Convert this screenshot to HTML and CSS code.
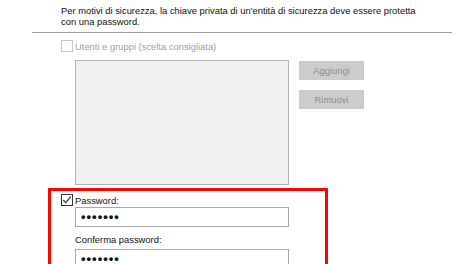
FILE: index.html
```html
<!DOCTYPE html>
<html lang="it">
<head>
<meta charset="UTF-8">
<title>Proteggi chiave privata</title>
<link rel="stylesheet" href="styles.css">
</head>
<body>
<div class="dialog">
<p class="intro">Per motivi di sicurezza, la chiave privata di un'entità di sicurezza deve essere protetta<br>con una password.</p>
<div class="separator"></div>
<div class="users">
<label class="check disabled"><span class="box"></span>Utenti e gruppi (scelta consigliata)</label>
<div class="users-row">
<div class="listbox"></div>
<div class="buttons">
<button disabled>Aggiungi</button>
<button disabled>Rimuovi</button>
</div>
</div>
</div>
<div class="password-box">
<label class="check"><span class="box checked"><svg width="10" height="10" viewBox="0 0 10 10"><path d="M1.2 5 L3.8 7.6 L8.8 1.4" fill="none" stroke="#333" stroke-width="1.1"/></svg></span>Password:</label>
<div class="field">•••••••</div>
<div class="field-label">Conferma password:</div>
<div class="field second">•••••••</div>
</div>
</div>
</body>
</html>
```

FILE: styles.css
```css
* {
    margin: 0;
    padding: 0;
    box-sizing: border-box;
}
body {
    background: white;
    color: #111;
    font-family: 'Liberation Sans', Arial, sans-serif;
    font-size: 9.4px;
}
.dialog {
    width: 470px;
    height: 264px;
    overflow: hidden;
}
.intro {
    padding: 5px 0 0 61px;
    line-height: 11px;
}
.separator {
    margin: 5px 0 0 32px;
    width: 420px;
    height: 1px;
    background: #a0a0a0;
}
.users {
    padding-left: 61px;
    margin-top: 7px;
}
.check {
    display: flex;
    align-items: center;
    height: 12px;
}
.check.disabled {
    color: #a0a0a0;
}
.box {
    width: 12px;
    height: 12px;
    border: 1px solid #c8c8c8;
    margin-right: 2px;
    display: flex;
    align-items: center;
    justify-content: center;
}
.box.checked {
    border-color: #333;
}
.users-row {
    display: flex;
    margin-top: 8px;
    margin-left: 14px;
}
.listbox {
    width: 214px;
    height: 125px;
    background: #f0f0f0;
    border: 1px solid #b4b4b4;
}
.buttons {
    display: flex;
    flex-direction: column;
    gap: 10px;
    margin-left: 10px;
    padding-top: 1px;
}
button {
    width: 65px;
    height: 19px;
    border: none;
    background: #cccccc;
    color: #8f8f8f;
    font-family: inherit;
    font-size: 9.4px;
}
.password-box {
    margin: 3px 0 0 48px;
    width: 280px;
    height: 80px;
    border: 3px solid #ff0000;
    border-bottom: none;
    padding: 3px 0 0 10px;
}
.field {
    margin: 1px 0 0 14px;
    width: 214px;
    height: 20px;
    border: 1px solid #a8a8a8;
    padding-left: 5px;
    font-size: 13px;
    font-weight: bold;
    line-height: 18px;
    letter-spacing: 1px;
}
.field.second {
    margin-top: 4px;
}
.field-label {
    margin: 7px 0 0 14px;
    line-height: 11px;
}
```
